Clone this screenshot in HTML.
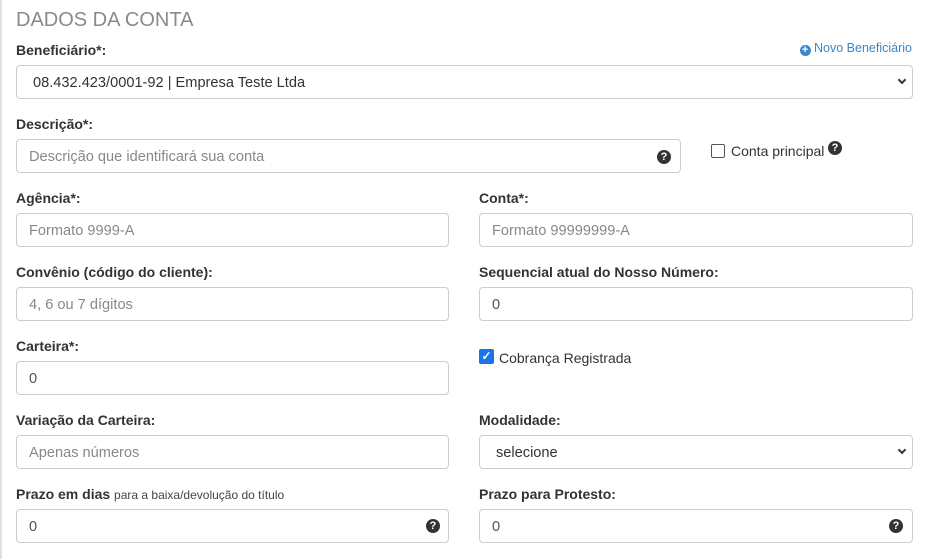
<!DOCTYPE html>
<html><head><meta charset="utf-8">
<style>
*{box-sizing:border-box;margin:0;padding:0}
html,body{width:928px;height:559px;overflow:hidden;background:#fff;font-family:"Liberation Sans",sans-serif}
.lb{position:absolute;left:0;top:0;width:2px;height:559px;background:#e0e0e0}
.t{position:absolute;left:16px;top:9px;font-size:20px;color:#8a8a8a}
.l{position:absolute;font-size:14px;font-weight:bold;color:#333}
.l small{font-weight:normal;font-size:12px;color:#444}
.i{position:absolute;height:34px;border:1px solid #ccc;border-radius:4px;background:#fff;font-size:14.6px;line-height:35px;padding-left:12px;color:#555}
.ph{color:#888}
.q{position:absolute;width:14px;height:14px;border-radius:50%;background:#333;color:#fff;font-size:11px;font-weight:bold;text-align:center;line-height:14px}
.ch{position:absolute;border-right:2px solid #333;border-bottom:2px solid #333;transform:rotate(45deg)}
</style></head><body>
<div class="lb"></div>
<div class="t">DADOS DA CONTA</div>

<div class="l" style="left:16px;top:42px">Beneficiário*:</div>
<div style="position:absolute;right:16px;top:41px;font-size:12.5px;color:#3a87c8"><span style="display:inline-block;width:11px;height:11px;border-radius:50%;background:#3a87c8;color:#fff;font-size:11px;line-height:11px;text-align:center;font-weight:bold;vertical-align:-1px">+</span> Novo Beneficiário</div>
<div class="i" style="left:16px;top:65px;width:897px;padding-left:16px;color:#333">08.432.423/0001-92 | Empresa Teste Ltda<span class="ch" style="top:11px;right:7px;width:6px;height:6px"></span></div>

<div class="l" style="left:16px;top:116px">Descrição*:</div>
<div class="i ph" style="left:16px;top:139px;width:665px">Descrição que identificará sua conta<span class="q" style="left:640px;top:10px">?</span></div>
<div style="position:absolute;left:711px;top:144px;width:14px;height:14px;border:1px solid #555;border-radius:2px"></div>
<div style="position:absolute;left:731px;top:143px;font-size:14px;color:#333">Conta principal</div>
<div class="q" style="left:828px;top:141px">?</div>

<div class="l" style="left:16px;top:190px">Agência*:</div>
<div class="i ph" style="left:16px;top:213px;width:433px">Formato 9999-A</div>
<div class="l" style="left:479px;top:190px">Conta*:</div>
<div class="i ph" style="left:479px;top:213px;width:434px">Formato 99999999-A</div>

<div class="l" style="left:16px;top:264px">Convênio (código do cliente):</div>
<div class="i ph" style="left:16px;top:287px;width:433px">4, 6 ou 7 dígitos</div>
<div class="l" style="left:479px;top:264px">Sequencial atual do Nosso Número:</div>
<div class="i" style="left:479px;top:287px;width:434px">0</div>

<div class="l" style="left:16px;top:338px">Carteira*:</div>
<div class="i" style="left:16px;top:361px;width:433px">0</div>
<div style="position:absolute;left:479px;top:349px;width:15px;height:15px;border-radius:2px;background:#1a73e8;color:#fff;font-size:12px;line-height:15px;text-align:center;font-weight:bold">✓</div>
<div style="position:absolute;left:499px;top:350px;font-size:14px;color:#333">Cobrança Registrada</div>

<div class="l" style="left:16px;top:412px">Variação da Carteira:</div>
<div class="i ph" style="left:16px;top:435px;width:433px">Apenas números</div>
<div class="l" style="left:479px;top:412px">Modalidade:</div>
<div class="i" style="left:479px;top:435px;width:434px;padding-left:16px;color:#333">selecione<span class="ch" style="top:11px;right:7px;width:6px;height:6px"></span></div>

<div class="l" style="left:16px;top:486px">Prazo em dias <small>para a baixa/devolução do título</small></div>
<div class="i" style="left:16px;top:509px;width:433px">0<span class="q" style="left:409px;top:9px">?</span></div>
<div class="l" style="left:479px;top:486px">Prazo para Protesto:</div>
<div class="i" style="left:479px;top:509px;width:434px">0<span class="q" style="left:409px;top:9px">?</span></div>
</body></html>
